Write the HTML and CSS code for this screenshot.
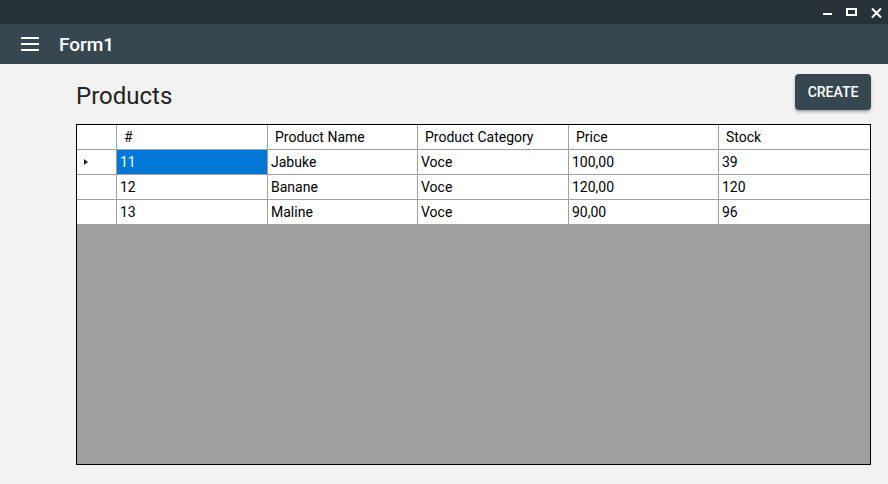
FILE: index.html
```html
<!DOCTYPE html>
<html>
<head>
<meta charset="utf-8">
<title>Form1</title>
<link rel="stylesheet" href="styles.css">
</head>
<body>
<div class="window">
  <div class="titlebar">
    <div class="controls">
      <svg class="ctl" width="12" height="14" viewBox="0 0 12 14"><rect x="1" y="8" width="9" height="2" fill="#fff"/></svg>
      <svg class="ctl" width="12" height="14" viewBox="0 0 12 14"><rect x="1" y="4" width="9" height="6" fill="none" stroke="#fff" stroke-width="2"/></svg>
      <svg class="ctl" width="12" height="14" viewBox="0 0 12 14"><path d="M1 3.5 L10 12.5 M10 3.5 L1 12.5" stroke="#fff" stroke-width="2"/></svg>
    </div>
  </div>
  <div class="appbar">
    <svg class="menu" width="18" height="16" viewBox="0 0 18 16"><rect x="0" y="1" width="18" height="2" fill="#fff"/><rect x="0" y="7" width="18" height="2" fill="#fff"/><rect x="0" y="13" width="18" height="2" fill="#fff"/></svg>
    <span class="apptitle">Form1</span>
  </div>
  <main class="content">
    <div class="head">
      <h1 class="title">Products</h1>
      <button class="create">CREATE</button>
    </div>
    <div class="grid">
      <div class="table">
        <div class="cell rh"></div>
        <div class="cell hd">#</div>
        <div class="cell hd">Product Name</div>
        <div class="cell hd">Product Category</div>
        <div class="cell hd">Price</div>
        <div class="cell hd last">Stock</div>

        <div class="cell rh"><span class="arrow"></span></div>
        <div class="cell sel">11</div>
        <div class="cell">Jabuke</div>
        <div class="cell">Voce</div>
        <div class="cell">100,00</div>
        <div class="cell last">39</div>

        <div class="cell rh"></div>
        <div class="cell">12</div>
        <div class="cell">Banane</div>
        <div class="cell">Voce</div>
        <div class="cell">120,00</div>
        <div class="cell last">120</div>

        <div class="cell rh"></div>
        <div class="cell">13</div>
        <div class="cell">Maline</div>
        <div class="cell">Voce</div>
        <div class="cell">90,00</div>
        <div class="cell last">96</div>
      </div>
    </div>
  </main>
</div>
</body>
</html>
```

FILE: styles.css
```css
html, body {
  margin: 0;
  padding: 0;
}
body {
  width: 888px;
  height: 484px;
  overflow: hidden;
  background: #f2f2f2;
  font-family: Roboto, "Liberation Sans", sans-serif;
}
.window {
  display: flex;
  flex-direction: column;
  height: 484px;
}
.titlebar {
  height: 24px;
  background: #263238;
  display: flex;
  justify-content: flex-end;
  align-items: flex-start;
}
.controls {
  display: flex;
  gap: 12px;
  padding: 5px 5px 0 0;
}
.ctl {
  display: block;
}
.ctl:last-child {
  margin-left: 1px;
}
.appbar {
  height: 40px;
  background: #37474f;
  display: flex;
  align-items: center;
  padding-left: 21px;
}
.menu {
  display: block;
}
.apptitle {
  margin-left: 20px;
  color: #fff;
  font-size: 19px;
  font-weight: 500;
}
.content {
  padding: 10px 17px 0 76px;
}
.head {
  display: flex;
  justify-content: space-between;
  align-items: flex-start;
  height: 36px;
}
.title {
  margin: 8px 0 0 0;
  font-size: 24px;
  font-weight: 400;
  line-height: 28px;
  color: #222;
}
.create {
  width: 76px;
  height: 36px;
  border: none;
  border-radius: 4px;
  background: #37474f;
  color: #fff;
  font-family: Roboto, "Liberation Sans", sans-serif;
  font-size: 14px;
  font-weight: 500;
  padding: 0;
  box-shadow: 0 2px 3px rgba(0,0,0,0.3);
}
.grid {
  margin-top: 14px;
  height: 339px;
  border: 1px solid #000;
  background: #a0a0a0;
}
.table {
  display: grid;
  grid-template-columns: 40px 151px 150px 151px 150px 151px;
  grid-auto-rows: 25px;
  background: #fff;
}
.cell {
  box-sizing: border-box;
  border-right: 1px solid #a0a0a0;
  border-bottom: 1px solid #a0a0a0;
  font-size: 14px;
  color: #000;
  padding-left: 3px;
  display: flex;
  align-items: center;
  white-space: nowrap;
}
.cell.hd {
  padding-left: 7px;
}
.cell.last {
  border-right: none;
}
.cell.sel {
  background: #0078d7;
  color: #fff;
}
.rh {
  padding-left: 7px;
}
.arrow {
  width: 0;
  height: 0;
  border-top: 3.5px solid transparent;
  border-bottom: 3.5px solid transparent;
  border-left: 4px solid #222;
}
```
